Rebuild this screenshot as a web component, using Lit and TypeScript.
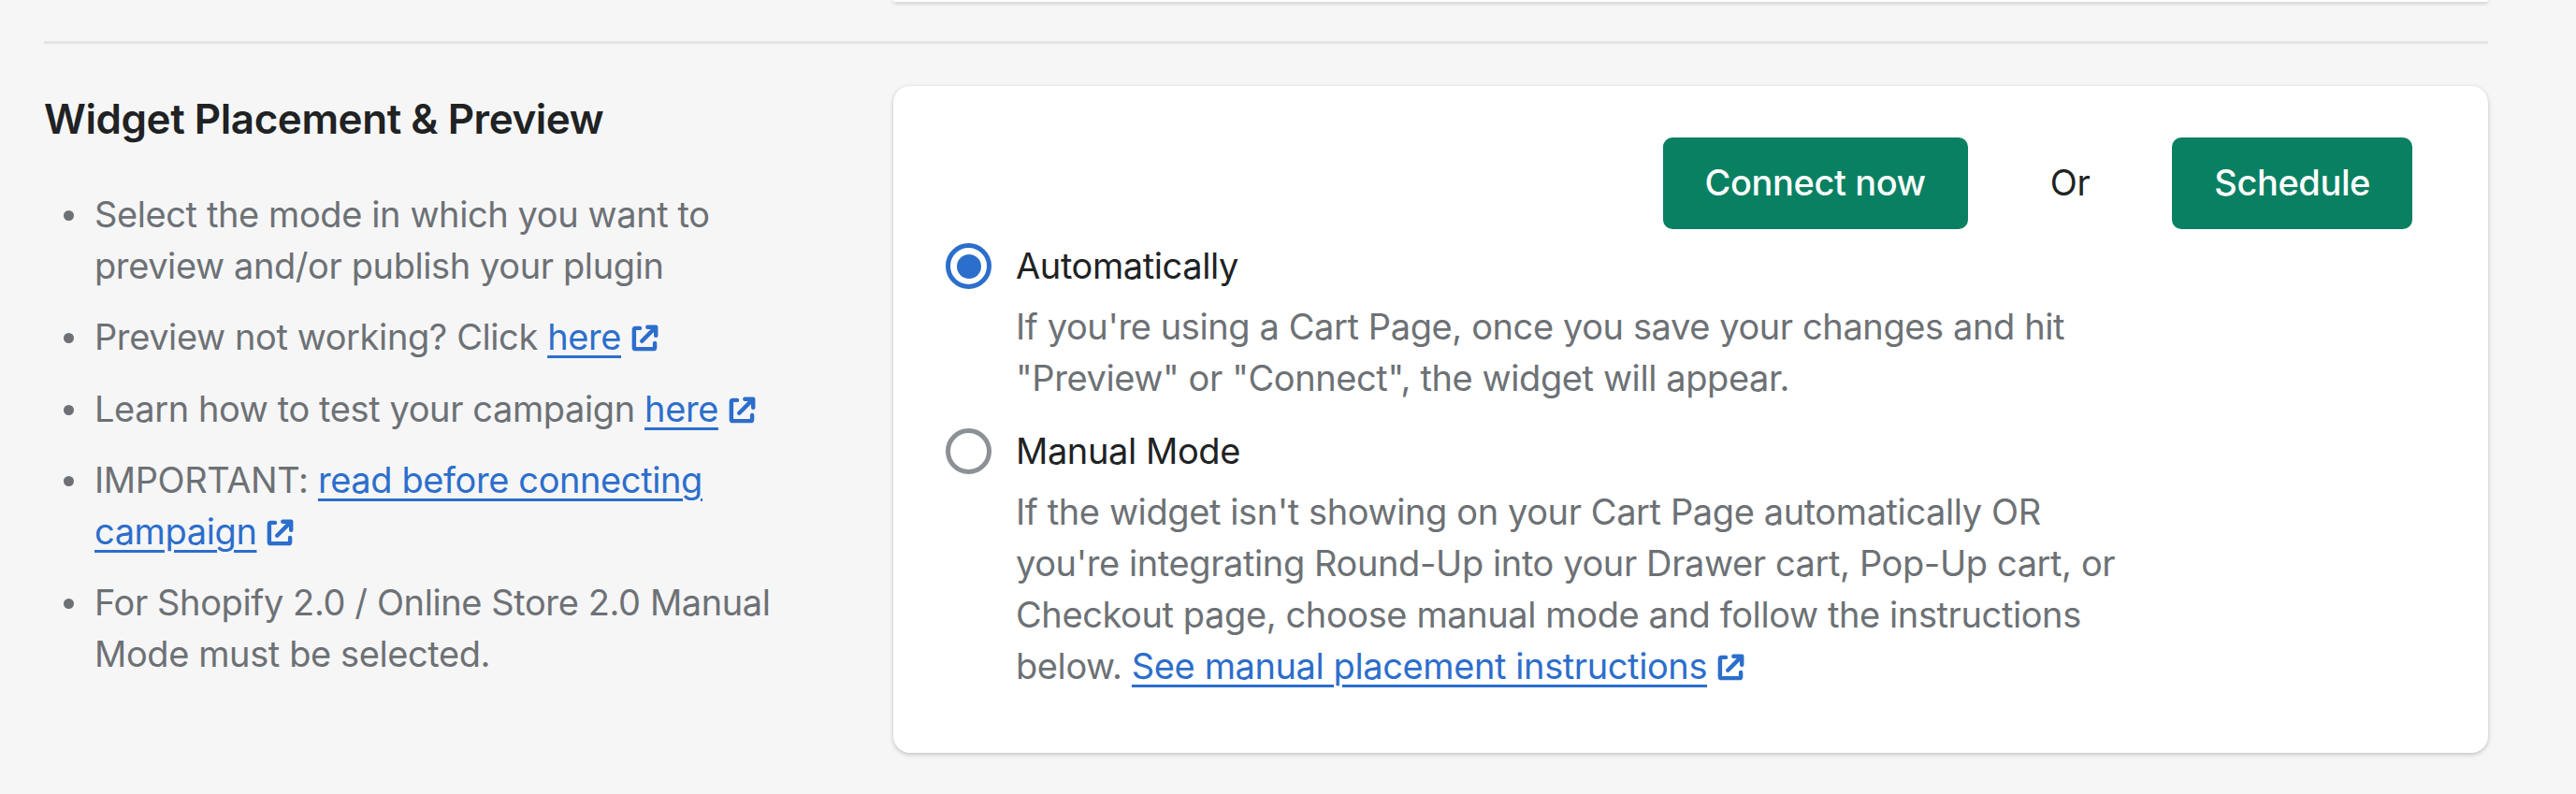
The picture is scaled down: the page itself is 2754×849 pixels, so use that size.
import { html, css, LitElement } from 'lit';
import { customElement, state } from 'lit/decorators.js';

const external = html`<svg class="ext" viewBox="0 0 27 27" aria-hidden="true">
  <path d="M9 3.5H5A1.5 1.5 0 0 0 3.500 5v17A1.500 1.500 0 0 0 5 23.500h17a1.500 1.500 0 0 0 1.500-1.500v-4" />
  <path d="M11 16 23 4M16.500 2.500h8v8" />
</svg>`;

@customElement('app-root')
export class AppRoot extends LitElement {
  static styles = css`
    :host {
      display: block;
      min-height: 849px;
      overflow: hidden;
      box-sizing: border-box;
      padding: 0 94px 0 47px;
      background: #f6f6f7;
      color: #202223;
      font-family: Inter, 'Noto Sans', sans-serif;
      font-size: 38px;
      line-height: 55.2px;
      letter-spacing: -0.4px;
    }

    .prev-card {
      height: 2px;
      margin-left: 908px;
      border-radius: 0 0 16px 16px;
      background: #fff;
      box-shadow: 0 1px 4px rgba(23, 24, 24, 0.35);
    }

    .divider {
      height: 3px;
      margin-top: 42px;
      background: #e3e4e6;
    }

    .section {
      display: flex;
      margin-top: 45px;
    }

    .side {
      flex: 0 0 908px;
    }

    h2 {
      margin: 0 0 40px;
      font-size: 44px;
      font-weight: 600;
      line-height: 70px;
      letter-spacing: -0.45px;
    }

    ul {
      margin: 0;
      padding: 0;
      list-style: none;
      color: #6d7175;
    }

    li {
      display: flex;
      gap: 22px;
      margin-bottom: 21px;
    }

    .dot {
      flex: none;
      width: 11px;
      height: 11px;
      margin: 23px 0 0 21px;
      border-radius: 50%;
      background: #6d7175;
    }

    a {
      color: #2c6ecb;
      text-decoration-thickness: 3px;
      text-underline-offset: 6px;
    }

    .ext {
      display: inline-block;
      width: 30px;
      height: 30px;
      margin-left: 10px;
      vertical-align: -3px;
      fill: none;
      stroke: #2c6ecb;
      stroke-width: 4;
      stroke-linecap: round;
      stroke-linejoin: round;
    }

    .card {
      flex: 1;
      box-sizing: border-box;
      height: 713px;
      padding: 55px 81px 0 56px;
      border-radius: 18px;
      background: #fff;
      box-shadow: 0 0 5px rgba(23, 24, 24, 0.05), 0 2px 5px rgba(0, 0, 0, 0.18);
    }

    .actions {
      display: flex;
      justify-content: flex-end;
      align-items: center;
      margin-bottom: 12px;
    }

    .btn {
      box-sizing: border-box;
      height: 98px;
      padding: 0 45px;
      border: 0;
      border-radius: 10px;
      background: #0a8062;
      color: #fff;
      font: inherit;
      font-weight: 500;
      letter-spacing: inherit;
    }

    .or {
      margin: 0 88px;
    }

    .option {
      margin-bottom: 22px;
    }

    .option-head {
      display: flex;
      align-items: center;
      gap: 26px;
      margin-bottom: 10px;
      cursor: pointer;
    }

    .radio {
      display: flex;
      flex: none;
      justify-content: center;
      align-items: center;
      box-sizing: border-box;
      width: 49px;
      height: 49px;
      border: 5px solid #8c9196;
      border-radius: 50%;
    }

    .radio.on {
      border-color: #2c6ecb;
    }

    .radio.on::after {
      content: '';
      width: 26px;
      height: 26px;
      border-radius: 50%;
      background: #2c6ecb;
    }

    .desc {
      margin: 0 0 0 75px;
      color: #6d7175;
      white-space: nowrap;
    }
  `;

  @state() mode = 'auto';

  renderHead(mode: string, label: string) {
    return html`<div class="option-head" @click=${() => (this.mode = mode)}>
      <span class="radio ${this.mode === mode ? 'on' : ''}"></span>
      <span>${label}</span>
    </div>`;
  }

  render() {
    return html`
      <div class="prev-card"></div>
      <div class="divider"></div>
      <div class="section">
        <div class="side">
          <h2>Widget Placement &amp; Preview</h2>
          <ul>
            <li><span class="dot"></span><span>Select the mode in which you want to<br />preview and/or publish your plugin</span></li>
            <li><span class="dot"></span><span>Preview not working? Click <a href="#">here</a>${external}</span></li>
            <li><span class="dot"></span><span>Learn how to test your campaign <a href="#">here</a>${external}</span></li>
            <li><span class="dot"></span><span>IMPORTANT: <a href="#">read before connecting<br />campaign</a>${external}</span></li>
            <li><span class="dot"></span><span>For Shopify 2.0 / Online Store 2.0 Manual<br />Mode must be selected.</span></li>
          </ul>
        </div>
        <div class="card">
          <div class="actions">
            <button class="btn">Connect now</button>
            <span class="or">Or</span>
            <button class="btn">Schedule</button>
          </div>
          <div class="option">
            ${this.renderHead('auto', 'Automatically')}
            <p class="desc">If you're using a Cart Page, once you save your changes and hit<br />"Preview" or "Connect", the widget will appear.</p>
          </div>
          <div class="option">
            ${this.renderHead('manual', 'Manual Mode')}
            <p class="desc">If the widget isn't showing on your Cart Page automatically OR<br />you're integrating Round-Up into your Drawer cart, Pop-Up cart, or<br />Checkout page, choose manual mode and follow the instructions<br />below. <a href="#">See manual placement instructions</a>${external}</p>
          </div>
        </div>
      </div>
    `;
  }
}
